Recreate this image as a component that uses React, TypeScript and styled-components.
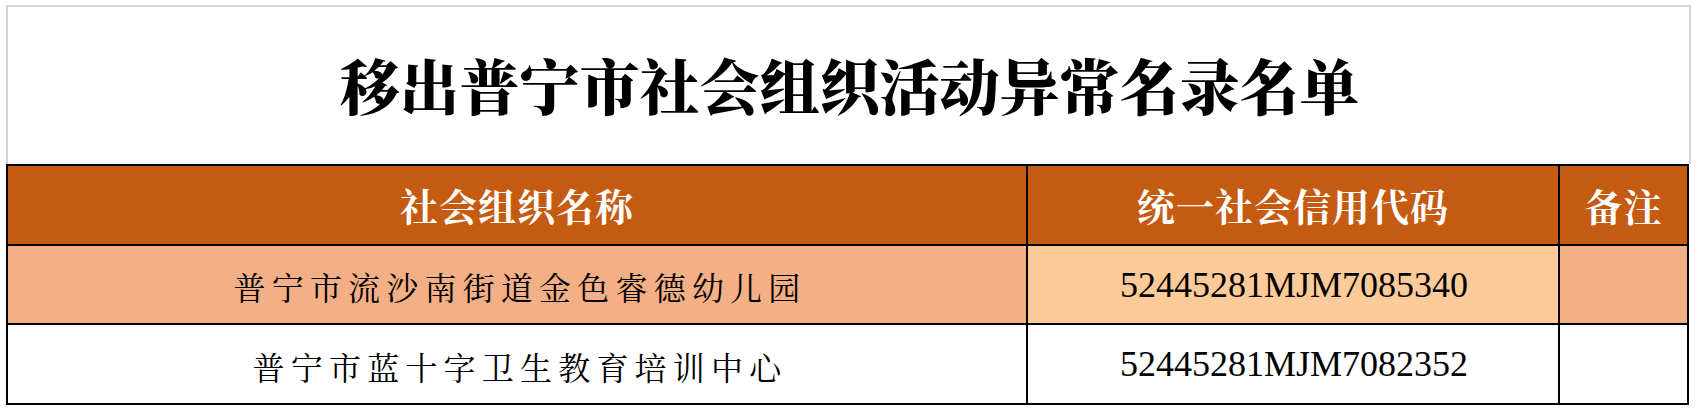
import React from "react";
import styled, { createGlobalStyle } from "styled-components";

const GlobalStyle = createGlobalStyle`
  html, body {
    margin: 0;
    padding: 0;
    background: #ffffff;
  }
  body {
    font-family: "Noto Serif CJK SC", "Liberation Serif", "Noto Sans CJK SC", serif;
  }
`;

const Sheet = styled.div`
  padding: 5px 0 0 6px;
  width: 1685px;
`;

const TitleCell = styled.div`
  height: 159px;
  border: 2px solid #d4d4d4;
  border-bottom: none;
  display: flex;
  align-items: center;
  justify-content: center;
  padding-bottom: 4px;
  box-sizing: border-box;
`;

const Title = styled.h1`
  margin: 0;
  font-family: "Noto Serif CJK SC", "Liberation Serif", "Noto Sans CJK SC", serif;
  font-size: 60px;
  font-weight: 900;
  color: #000000;
  line-height: 1;
  padding-left: 2px;
`;

const Table = styled.div`
  display: grid;
  grid-template-columns: 1020px 532px 129px;
  grid-template-rows: 80px 79px 80px;
  width: 1683px;
  border-top: 2px solid #000000;
  border-left: 2px solid #000000;
  box-sizing: border-box;
`;

type Tone = "head" | "salmon" | "peach" | "plain";

const toneBg: Record<Tone, string> = {
  head: "#c55a11",
  salmon: "#f3af85",
  peach: "#fdcb99",
  plain: "#ffffff",
};

const Cell = styled.div<{ $tone: Tone }>`
  background: ${(p) => toneBg[p.$tone]};
  border-right: 2px solid #000000;
  border-bottom: 2px solid #000000;
  display: flex;
  align-items: center;
  justify-content: center;
  overflow: hidden;
`;

const HeadText = styled.span`
  font-family: "Noto Serif CJK SC", "Liberation Serif", "Noto Sans CJK SC", serif;
  font-size: 38px;
  font-weight: 700;
  color: #ffffff;
  letter-spacing: 1px;
  line-height: 1;
`;

const NameText = styled.span`
  font-family: "Noto Serif CJK SC", "Liberation Serif", "Noto Sans CJK SC", serif;
  font-size: 32px;
  font-weight: 400;
  color: #000000;
  letter-spacing: 6.2px;
  line-height: 1;
  padding-left: 6px;
  padding-top: 3px;
`;

const CodeText = styled.span`
  font-family: "Liberation Serif", "Times New Roman", serif;
  font-size: 36px;
  color: #000000;
  line-height: 1;
  padding-left: 2px;
`;

const rows = [
  { name: "普宁市流沙南街道金色睿德幼儿园", code: "52445281MJM7085340", shaded: true },
  { name: "普宁市蓝十字卫生教育培训中心", code: "52445281MJM7082352", shaded: false },
];

export default function App() {
  return (
    <>
      <GlobalStyle />
      <Sheet>
        <TitleCell>
          <Title>移出普宁市社会组织活动异常名录名单</Title>
        </TitleCell>
        <Table>
          <Cell $tone="head">
            <HeadText>社会组织名称</HeadText>
          </Cell>
          <Cell $tone="head">
            <HeadText>统一社会信用代码</HeadText>
          </Cell>
          <Cell $tone="head">
            <HeadText>备注</HeadText>
          </Cell>
          {rows.map((r) => (
            <React.Fragment key={r.code}>
              <Cell $tone={r.shaded ? "salmon" : "plain"}>
                <NameText>{r.name}</NameText>
              </Cell>
              <Cell $tone={r.shaded ? "peach" : "plain"}>
                <CodeText>{r.code}</CodeText>
              </Cell>
              <Cell $tone={r.shaded ? "salmon" : "plain"} />
            </React.Fragment>
          ))}
        </Table>
      </Sheet>
    </>
  );
}
